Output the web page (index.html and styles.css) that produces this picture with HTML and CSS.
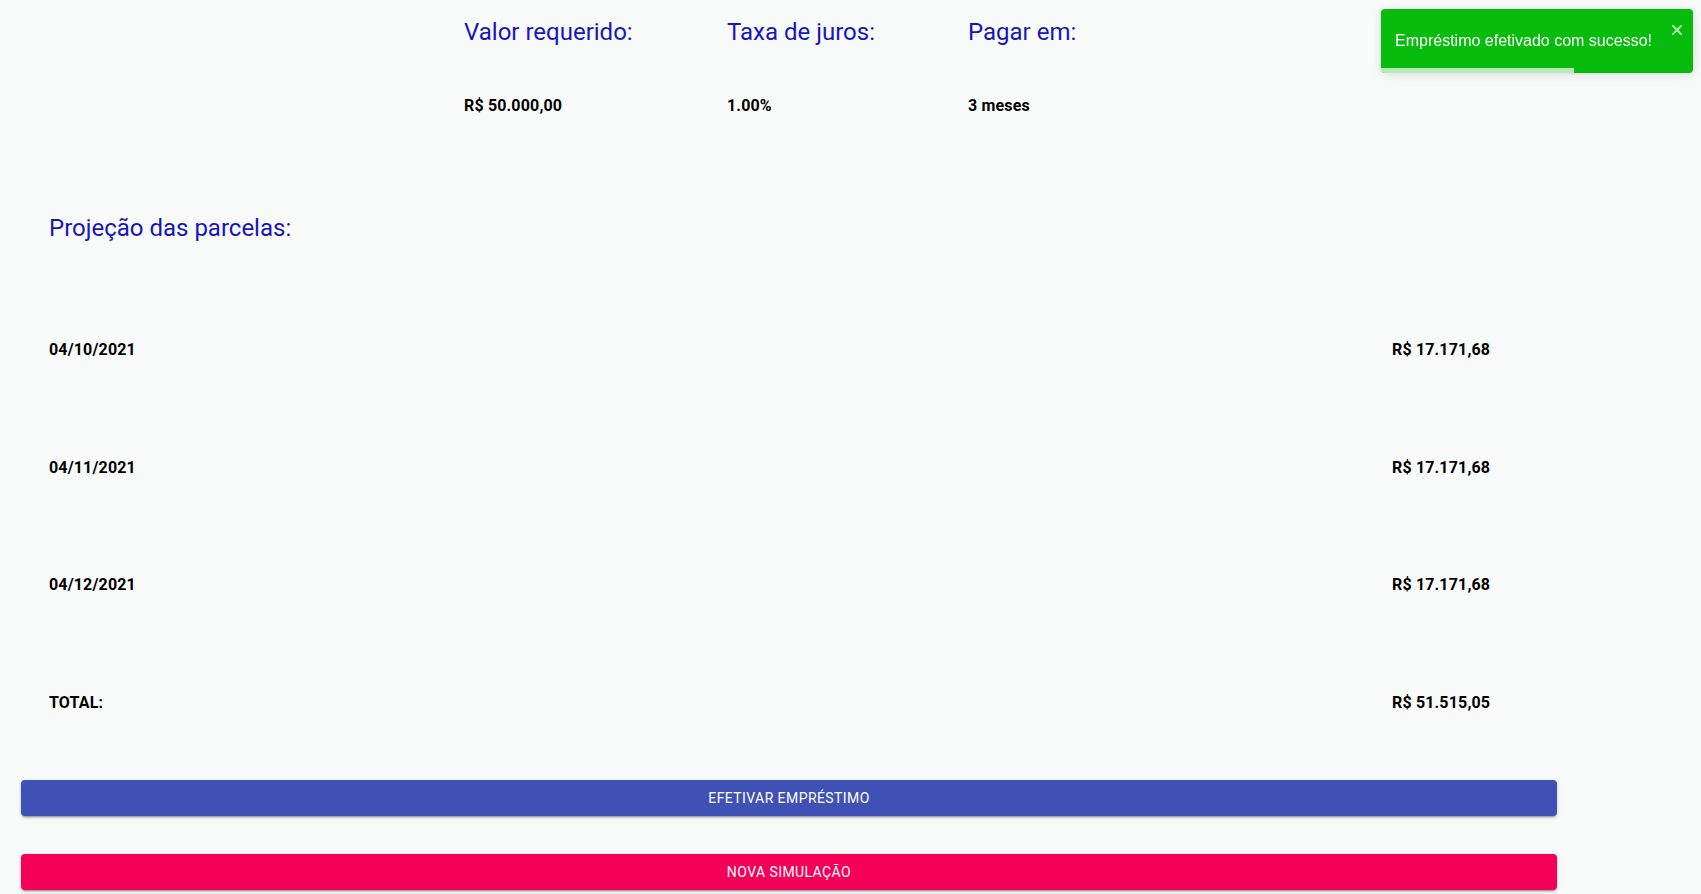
FILE: index.html
```html
<!DOCTYPE html>
<html lang="pt-BR">
<head>
<meta charset="utf-8">
<title>Empréstimo</title>
<link rel="stylesheet" href="styles.css">
</head>
<body>
<main class="page">
  <section class="summary">
    <div class="summary-col">
      <h5 class="title">Valor requerido:</h5>
      <p class="value">R$ 50.000,00</p>
    </div>
    <div class="summary-col">
      <h5 class="title">Taxa de juros:</h5>
      <p class="value">1.00%</p>
    </div>
    <div class="summary-col">
      <h5 class="title">Pagar em:</h5>
      <p class="value">3 meses</p>
    </div>
  </section>

  <h5 class="title section-title">Projeção das parcelas:</h5>

  <section class="installments">
    <div class="row"><span class="value">04/10/2021</span><span class="value">R$ 17.171,68</span></div>
    <div class="row"><span class="value">04/11/2021</span><span class="value">R$ 17.171,68</span></div>
    <div class="row"><span class="value">04/12/2021</span><span class="value">R$ 17.171,68</span></div>
    <div class="row"><span class="value">TOTAL:</span><span class="value">R$ 51.515,05</span></div>
  </section>

  <div class="actions">
    <button class="btn btn-primary" type="button">Efetivar Empréstimo</button>
    <button class="btn btn-secondary" type="button">Nova Simulação</button>
  </div>
</main>

<div class="toast">
  <div class="toast-body">Empréstimo efetivado com sucesso!</div>
  <button class="toast-close" type="button" aria-label="close">
    <svg width="10" height="10" viewBox="0 0 10 10"><path d="M1 1 L9 9 M9 1 L1 9" stroke="currentColor" stroke-width="1.8" stroke-linecap="square"/></svg>
  </button>
  <div class="toast-progress"></div>
</div>
</body>
</html>
```

FILE: styles.css
```css
* { box-sizing: border-box; }

html, body {
  margin: 0;
  padding: 0;
}

body {
  background: #f9fafa;
  font-family: Roboto, "Noto Sans", Arial, sans-serif;
  color: #000;
  width: 1701px;
  height: 894px;
  overflow: hidden;
}

.page {
  padding-top: 16px;
}

.title {
  margin: 0;
  font-size: 24px;
  font-weight: 400;
  line-height: 32px;
  color: #1717b9;
}

.value {
  margin: 0;
  font-size: 16px;
  font-weight: 700;
  line-height: 24px;
  color: #000;
  letter-spacing: 0.01em;
}

.summary {
  display: grid;
  grid-template-columns: 263px 241px auto;
  padding-left: 464px;
}

.summary-col .value {
  margin-top: 46px;
}

.section-title {
  margin-top: 94px;
  padding-left: 49px;
}

.installments {
  margin-top: 94px;
  padding-left: 49px;
  display: flex;
  flex-direction: column;
  gap: 93.5px;
}

.row {
  display: grid;
  grid-template-columns: 1343px auto;
}

.actions {
  margin-top: 65px;
  margin-left: 21px;
  width: 1536px;
  display: flex;
  flex-direction: column;
  gap: 38px;
}

.btn {
  display: block;
  width: 100%;
  height: 36px;
  border: 0;
  border-radius: 4px;
  font-family: Roboto, Arial, sans-serif;
  font-size: 14px;
  font-weight: 400;
  letter-spacing: 0.03em;
  text-transform: uppercase;
  color: #fff;
  box-shadow: 0 3px 1px -2px rgba(0,0,0,0.2), 0 2px 2px 0 rgba(0,0,0,0.14), 0 1px 5px 0 rgba(0,0,0,0.12);
  cursor: pointer;
}

.btn-primary { background: #3f51b5; }
.btn-secondary { background: #f50057; }

.toast {
  position: fixed;
  top: 9px;
  right: 8px;
  width: 312px;
  min-height: 64px;
  background: #07bc0c;
  border-radius: 4px;
  box-shadow: 0 1px 10px 0 rgba(0,0,0,0.1), 0 2px 15px 0 rgba(0,0,0,0.05);
  display: flex;
  align-items: center;
  padding: 8px 8px 8px 14px;
  overflow: hidden;
  font-family: "Liberation Sans", Arial, sans-serif;
}

.toast-body {
  flex: 1;
  color: #fff;
  font-size: 16px;
  line-height: 22px;
}

.toast-close {
  position: absolute;
  top: 16px;
  right: 11px;
  background: transparent;
  border: 0;
  padding: 0;
  color: #fff;
  opacity: 0.7;
  display: flex;
}

.toast-progress {
  position: absolute;
  left: 0;
  bottom: 0;
  height: 5px;
  width: 193px;
  background: rgba(255,255,255,0.7);
}
```
